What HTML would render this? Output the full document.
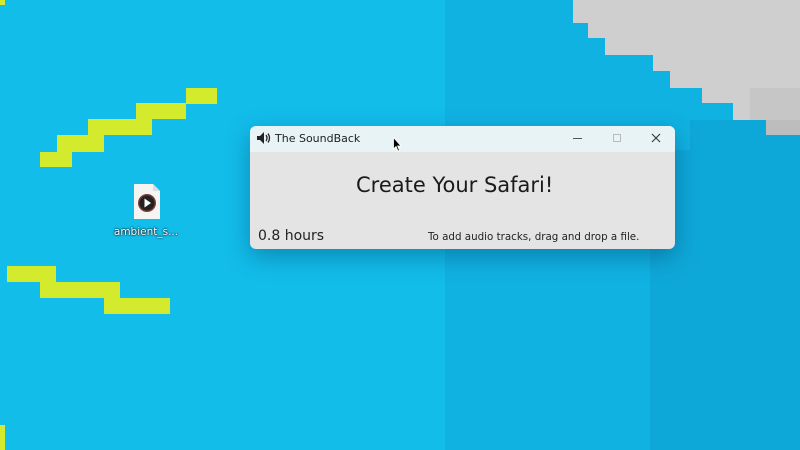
<!DOCTYPE html>
<html><head><style>
*{margin:0;padding:0;box-sizing:border-box}
body{width:800px;height:450px;overflow:hidden;position:relative;background:#12BDEA;font-family:"DejaVu Sans","Liberation Sans",sans-serif}
.a{position:absolute}
.y{position:absolute;background:#D4EA2C}
.g{position:absolute;background:#CFCFCF}
</style></head><body>
<div class="a" style="left:445px;top:0;width:355px;height:450px;background:#10B2E2"></div>
<div class="a" style="left:650px;top:150px;width:150px;height:300px;background:#0EA8D8"></div>
<div class="a" style="left:690px;top:120px;width:110px;height:40px;background:#0EA8D8"></div>
<!-- gray -->
<div class="g" style="left:573px;top:0;width:227px;height:23px"></div>
<div class="g" style="left:588px;top:23px;width:212px;height:15px"></div>
<div class="g" style="left:605px;top:38px;width:195px;height:17px"></div>
<div class="g" style="left:653px;top:55px;width:147px;height:16px"></div>
<div class="g" style="left:670px;top:71px;width:130px;height:17px"></div>
<div class="g" style="left:702px;top:88px;width:98px;height:15px"></div>
<div class="g" style="left:733px;top:103px;width:67px;height:17px"></div>
<div class="a" style="left:750px;top:88px;width:50px;height:32px;background:#C6C6C6"></div>
<div class="a" style="left:766px;top:120px;width:34px;height:15px;background:#BDBDBD"></div>
<!-- yellow -->
<div class="y" style="left:186px;top:88px;width:31px;height:16px"></div>
<div class="y" style="left:136px;top:103px;width:50px;height:16px"></div>
<div class="y" style="left:88px;top:119px;width:64px;height:16px"></div>
<div class="y" style="left:57px;top:135px;width:47px;height:17px"></div>
<div class="y" style="left:40px;top:152px;width:32px;height:15px"></div>
<div class="y" style="left:7px;top:266px;width:49px;height:16px"></div>
<div class="y" style="left:40px;top:282px;width:80px;height:16px"></div>
<div class="y" style="left:104px;top:298px;width:66px;height:16px"></div>
<div class="y" style="left:0;top:0;width:5px;height:5px"></div>
<div class="y" style="left:0;top:425px;width:5px;height:25px"></div>
<!-- desktop icon -->
<svg class="a" style="left:133px;top:183px" width="28" height="37" viewBox="0 0 28 37">
<path d="M1 1H20L27 8V36H1Z" fill="#F4F4F4"/><path d="M20 1V8H27" fill="#DDD"/>
<circle cx="14" cy="20" r="9" fill="#7a3a30"/><circle cx="14" cy="20" r="7.5" fill="#222"/>
<path d="M11.5 15.5L18 20L11.5 24.5Z" fill="#fff"/></svg>
<div class="a" style="left:106px;top:226px;width:80px;text-align:center;color:#fff;font-size:10.5px;text-shadow:0 0 2px #000,0 0 1px #000">ambient_s...</div>
<!-- window -->
<div class="a" style="left:250px;top:126px;width:425px;height:123px;border-radius:6px;background:#E4E4E4;box-shadow:0 8px 24px rgba(0,40,80,.35);overflow:hidden">
<div style="height:26px;background:#E8F3F6;position:relative">
<svg class="a" style="left:7px;top:6px" width="14" height="12" viewBox="0 0 14 12"><path d="M0 4H3L7 0V12L3 8H0Z" fill="#222"/><path d="M9 3Q11 6 9 9M11 1.5Q14 6 11 10.5" stroke="#222" stroke-width="1.3" fill="none"/></svg>
<div class="a" style="left:25px;top:6px;font-size:11px;color:#222">The SoundBack</div>
<div class="a" style="left:323px;top:12px;width:9px;height:1px;background:#555"></div>
<div class="a" style="left:363px;top:8px;width:8px;height:8px;border:1px solid #bbb"></div>
<svg class="a" style="left:401px;top:7px" width="10" height="10"><path d="M1 1L9 9M9 1L1 9" stroke="#333" stroke-width="1.1"/></svg>
</div>
<div class="a" style="left:106px;top:47px;width:196px;text-align:center;font-size:21px;color:#1a1a1a;white-space:nowrap">Create Your Safari!</div>
<div class="a" style="left:8px;top:102px;font-size:14px;color:#222">0.8 hours</div>
<div class="a" style="left:178px;top:105px;font-size:10.3px;color:#222;white-space:nowrap">To add audio tracks, drag and drop a file.</div>
</div>
<svg class="a" style="left:393px;top:137px" width="10" height="16" viewBox="0 0 10 16"><path d="M0.5 0.5V12L3 9.5L5 14L6.5 13.3L4.6 9H8Z" fill="#000" stroke="#fff" stroke-width=".8"/></svg>
</body></html>
